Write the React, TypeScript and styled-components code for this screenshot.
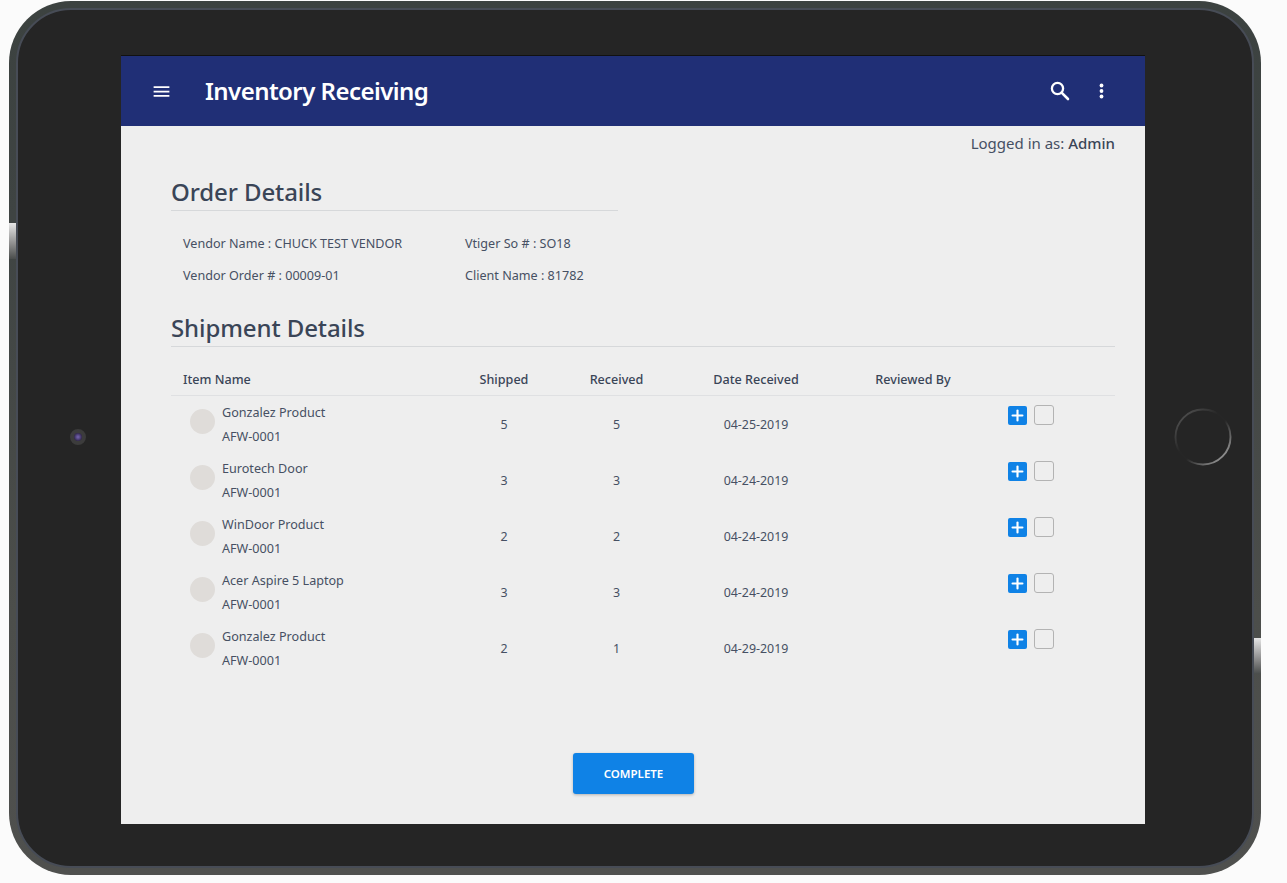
import styled, { createGlobalStyle } from "styled-components";
import { Plus } from "lucide-react";
import { MdMenu } from "react-icons/md";

const items = [
  { name: "Gonzalez Product", code: "AFW-0001", shipped: 5, received: 5, date: "04-25-2019" },
  { name: "Eurotech Door", code: "AFW-0001", shipped: 3, received: 3, date: "04-24-2019" },
  { name: "WinDoor Product", code: "AFW-0001", shipped: 2, received: 2, date: "04-24-2019" },
  { name: "Acer Aspire 5 Laptop", code: "AFW-0001", shipped: 3, received: 3, date: "04-24-2019" },
  { name: "Gonzalez Product", code: "AFW-0001", shipped: 2, received: 1, date: "04-29-2019" },
];

function App() {
  return (
    <Page>
      <GlobalStyle />
      <Tablet>
        <Bezel>
          <Glare $side="left" $top={223} />
          <Glare $side="right" $top={638} />
          <Camera />
          <HomeButton viewBox="0 0 58 58">
            <defs>
              <linearGradient id="ring" x1="0" y1="0" x2="1" y2="1">
                <stop offset="0" stopColor="#5c5c5c" />
                <stop offset="0.42" stopColor="#262626" />
                <stop offset="0.55" stopColor="#262626" />
                <stop offset="0.9" stopColor="#9a9a9a" />
              </linearGradient>
            </defs>
            <circle cx="29" cy="29" r="27.5" fill="none" stroke="url(#ring)" strokeWidth="1.9" />
          </HomeButton>
          <Screen>
            <AppBar>
              <MenuButton>
                <MdMenu size={21} />
              </MenuButton>
              <Title>Inventory Receiving</Title>
              <BarActions>
                <svg width="25" height="25" viewBox="0 0 25 25" fill="none" stroke="currentColor">
                  <circle cx="10.5" cy="9.5" r="5.6" strokeWidth="2.3" />
                  <path d="M14.6 13.6L21 20" strokeWidth="2.6" strokeLinecap="round" />
                </svg>
                <svg width="21" height="21" viewBox="0 0 21 21" fill="currentColor">
                  <circle cx="10.5" cy="4.5" r="1.9" />
                  <circle cx="10.5" cy="10" r="1.9" />
                  <circle cx="10.5" cy="15.5" r="1.9" />
                </svg>
              </BarActions>
            </AppBar>
            <Content>
              <LoggedIn>
                Logged in as: <strong>Admin</strong>
              </LoggedIn>
              <OrderSection>
                <SectionTitle>Order Details</SectionTitle>
                <OrderGrid>
                  <Detail>Vendor Name : CHUCK TEST VENDOR</Detail>
                  <Detail>Vtiger So # : SO18</Detail>
                  <Detail>Vendor Order # : 00009-01</Detail>
                  <Detail>Client Name : 81782</Detail>
                </OrderGrid>
              </OrderSection>
              <section>
                <SectionTitle>Shipment Details</SectionTitle>
                <HeadRow>
                  <HeadCell $left>Item Name</HeadCell>
                  <HeadCell>Shipped</HeadCell>
                  <HeadCell>Received</HeadCell>
                  <HeadCell>Date Received</HeadCell>
                  <HeadCell>Reviewed By</HeadCell>
                  <span />
                </HeadRow>
                {items.map((item, i) => (
                  <Row key={i}>
                    <ItemCell>
                      <Avatar />
                      <ItemText>
                        <span>{item.name}</span>
                        <span>{item.code}</span>
                      </ItemText>
                    </ItemCell>
                    <Cell>{item.shipped}</Cell>
                    <Cell>{item.received}</Cell>
                    <Cell>{item.date}</Cell>
                    <Cell />
                    <ActionCell>
                      <AddButton>
                        <Plus size={17} strokeWidth={3} />
                      </AddButton>
                      <CheckBox />
                    </ActionCell>
                  </Row>
                ))}
              </section>
              <Footer>
                <CompleteButton>COMPLETE</CompleteButton>
              </Footer>
            </Content>
          </Screen>
        </Bezel>
      </Tablet>
    </Page>
  );
}

const GlobalStyle = createGlobalStyle`
  html, body {
    margin: 0;
    background: #fbfbfb;
  }
  * {
    box-sizing: border-box;
  }
`;

const Page = styled.div`
  width: 1287px;
  height: 883px;
  padding: 1px 0 0 9px;
  overflow: hidden;
  font-family: "Noto Sans", "Open Sans", sans-serif;
  color: #465063;
`;

const Tablet = styled.div`
  width: 1252px;
  height: 874px;
  padding: 7px;
  border-radius: 62px;
  background: linear-gradient(#3c4240, #3f4443 25%, #4c4e4b 70%, #4f504e);
`;

const Bezel = styled.div`
  position: relative;
  height: 100%;
  padding: 45px 0 0 103px;
  border: 2px solid #474c56;
  border-radius: 55px;
  background: #252525;
`;

const Glare = styled.div<{ $side: string; $top: number }>`
  position: absolute;
  top: ${(p) => p.$top - 10}px;
  ${(p) => p.$side}: -9px;
  width: 7px;
  height: 36px;
  background: linear-gradient(#e6e6e6, #8a8a8a 60%, #4a4d4c);
`;

const Camera = styled.div`
  position: absolute;
  top: 419px;
  left: 52px;
  width: 16px;
  height: 16px;
  border-radius: 50%;
  border: 4px solid #3c3c3c;
  background: radial-gradient(#6a5aa0 15%, #33294f 70%);
`;

const HomeButton = styled.svg`
  position: absolute;
  top: 398px;
  right: 20px;
  width: 58px;
  height: 58px;
`;

const Screen = styled.div`
  width: 1024px;
  height: 769px;
  border-top: 1px solid #111;
  background: #eeeeee;
  display: flex;
  flex-direction: column;
`;

const AppBar = styled.header`
  height: 70px;
  flex: none;
  display: flex;
  align-items: center;
  padding: 0 33px 0 30px;
  background: #202f76;
  color: #fff;
`;

const MenuButton = styled.div`
  display: flex;
  width: 54px;
`;

const Title = styled.h1`
  margin: -2px 0 0;
  font-size: 24px;
  font-weight: 600;
  letter-spacing: -0.55px;
  flex: 1;
`;

const BarActions = styled.div`
  display: flex;
  align-items: center;
  gap: 19px;
`;

const Content = styled.main`
  flex: 1;
  padding: 0 30px 0 50px;
  display: flex;
  flex-direction: column;
`;

const LoggedIn = styled.div`
  text-align: right;
  font-size: 15px;
  line-height: 20px;
  margin-top: 7px;
  strong {
    font-weight: 500;
    color: #3a4557;
  }
`;

const OrderSection = styled.section`
  width: 447px;
  margin-top: 22px;
  margin-bottom: 25px;
`;

const SectionTitle = styled.h2`
  margin: 0;
  height: 36px;
  font-size: 24px;
  line-height: 34px;
  font-weight: 500;
  letter-spacing: -0.1px;
  color: #3a4557;
  border-bottom: 1px solid #d6d8da;
`;

const OrderGrid = styled.div`
  display: grid;
  grid-template-columns: 282px 1fr;
  row-gap: 12px;
  padding: 23px 0 0 12px;
`;

const Detail = styled.div`
  font-size: 12.6px;
  line-height: 20px;
  white-space: nowrap;
`;

const columns = "275px 116px 109px 170px 144px 130px";

const HeadRow = styled.div`
  display: grid;
  grid-template-columns: ${columns};
  height: 49px;
  align-items: center;
  padding-top: 17px;
  border-bottom: 1px solid #dfe0e2;
`;

const HeadCell = styled.div<{ $left?: boolean }>`
  font-size: 12.6px;
  font-weight: 500;
  color: #3a4557;
  text-align: ${(p) => (p.$left ? "left" : "center")};
  padding-left: ${(p) => (p.$left ? "12px" : "0")};
`;

const Row = styled.div`
  display: grid;
  grid-template-columns: ${columns};
  height: 56px;
  align-items: center;
`;

const ItemCell = styled.div`
  display: flex;
  align-items: center;
  padding-left: 19px;
  gap: 7px;
`;

const Avatar = styled.div`
  width: 25px;
  height: 25px;
  border-radius: 50%;
  background: #dfdcd9;
  margin-top: -6px;
`;

const ItemText = styled.div`
  display: flex;
  flex-direction: column;
  font-size: 12.6px;
  line-height: 24px;
  margin-top: 2px;
`;

const Cell = styled.div`
  font-size: 12.4px;
  text-align: center;
  padding-top: 1px;
`;

const ActionCell = styled.div`
  display: flex;
  align-items: flex-start;
  gap: 7px;
  padding-left: 23px;
  margin-top: -19px;
`;

const AddButton = styled.div`
  width: 19px;
  height: 19px;
  margin-top: 1px;
  border-radius: 2px;
  background: #0f82e6;
  color: #fff;
  display: flex;
  align-items: center;
  justify-content: center;
`;

const CheckBox = styled.div`
  width: 20px;
  height: 20px;
  border: 1px solid #b3b3b3;
  border-radius: 3px;
`;

const Footer = styled.div`
  display: flex;
  justify-content: center;
  margin-top: 77px;
  padding-right: 19px;
`;

const CompleteButton = styled.button`
  width: 121px;
  height: 41px;
  border: 0;
  border-radius: 3px;
  background: #0f82e6;
  color: #fff;
  font-family: inherit;
  font-size: 11.5px;
  font-weight: 600;
  box-shadow: 0 1px 3px rgba(0, 0, 0, 0.25);
`;

export default App;
